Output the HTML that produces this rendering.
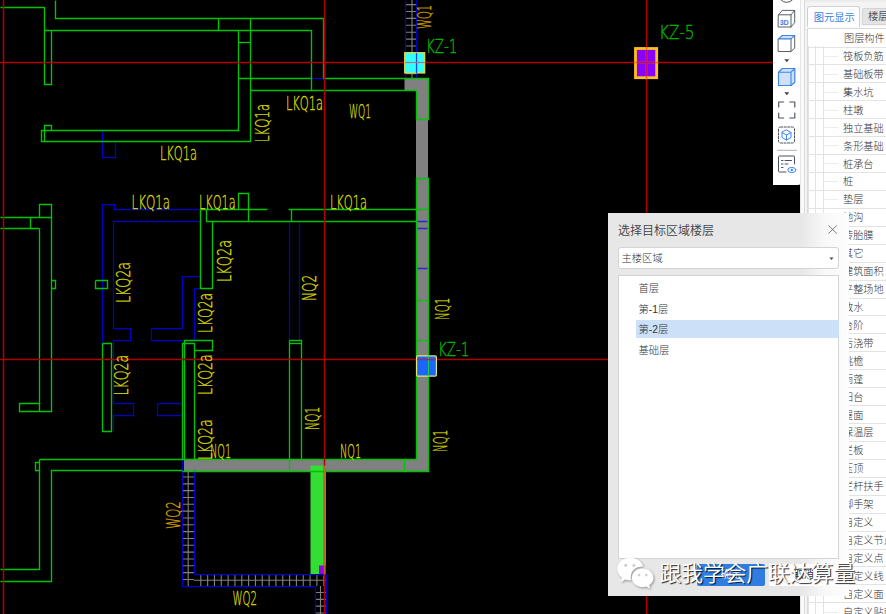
<!DOCTYPE html>
<html lang="zh-CN"><head><meta charset="utf-8"><title>选择目标区域楼层</title>
<style>
html,body{margin:0;padding:0;background:#000;}
body{width:886px;height:614px;overflow:hidden;position:relative;font-family:"Liberation Sans","Noto Sans CJK SC",sans-serif;}
#cad{position:absolute;left:0;top:0;}
#tb{position:absolute;left:773px;top:0;width:27.5px;height:184.5px;background:#fff;border-radius:0 0 3px 0;}
#tb svg{position:absolute;left:0;top:0;}
#rp{position:absolute;left:800px;top:0;width:86px;height:614px;background:linear-gradient(90deg,#e6e6e6 0,#e6e6e6 1px,#fafafa 1px,#fafafa 4px,#dadada 4px,#dadada 5px,#f4f4f4 5px);overflow:hidden;}
#rp .in{position:absolute;left:1px;top:0;width:85px;height:614px;}
#rp .tb2{position:absolute;left:5px;top:26px;width:90px;height:3px;background:#fbfbfb;}
#rp .ts{position:absolute;left:4px;top:0;width:90px;height:2px;background:#ececec;}
#rp .list{position:absolute;left:6px;top:28px;width:90px;height:600px;background:#fff;border-left:1px solid #d9d9d9;border-top:1px solid #d9d9d9;}
#rp .vl{position:absolute;top:46px;width:1px;height:580px;background:#e3e3e3;}
#rp .tab{position:absolute;left:6px;top:6px;width:53px;height:20.5px;padding-left:1.5px;padding-top:0.6px;background:#fff;border:1px solid #d0d0d0;border-bottom:none;border-radius:3px 3px 0 0;box-sizing:border-box;color:#3a7fd8;font-size:10.3px;line-height:20px;text-align:center;}
#rp .tab2{position:absolute;left:61px;top:8.2px;width:40px;height:16.8px;background:#e4e4e4;border:1px solid #d4d4d4;border-radius:2px 2px 0 0;box-sizing:border-box;color:#555;font-size:10.3px;line-height:16.5px;padding-left:5px;white-space:nowrap;}
.row{position:absolute;left:6px;width:90px;height:17.93px;border-bottom:1px solid #e3e3e3;box-sizing:border-box;font-size:10.2px;color:#333;white-space:nowrap;}
.row span{position:absolute;left:36px;top:0.4px;font-weight:300;line-height:18.93px;}
.row i{position:absolute;left:17px;top:8.2px;width:14px;height:1px;background:#ededed;}
#dlg{position:absolute;left:608px;top:213px;width:240.5px;height:383px;background:linear-gradient(90deg,#e7e7e7 0,#e7e7e7 193px,#efefef 204px,#f8f8f8 216px,#fdfdfd 240px);}
#dlg .ttl{font-weight:350;position:absolute;left:10px;top:8.7px;font-size:12px;color:#444;line-height:18px;white-space:nowrap;}
#dlg .sel{position:absolute;left:10px;top:34px;width:221px;height:22px;font-weight:300;background:#fff;border:1px solid #d4d4d4;border-radius:3px;box-sizing:border-box;font-size:10.3px;color:#333;line-height:21.5px;padding-left:2.5px;}
#dlg .lb{position:absolute;left:10px;top:62px;width:221px;height:283.5px;background:#fff;border:1px solid #d4d4d4;box-sizing:border-box;}
#dlg .it{font-weight:300;position:absolute;left:16.5px;width:202.5px;height:18px;font-size:10.3px;color:#333;line-height:18px;padding-left:3px;box-sizing:border-box;white-space:nowrap;}
#dlg .ok{position:absolute;left:89px;top:350.5px;width:68px;height:22px;background:#2f7de1;border-radius:2px;color:#fff;font-size:10.3px;line-height:22px;text-align:center;}
#dlg .cc{position:absolute;left:161px;top:350.5px;width:69.5px;height:22px;background:#fdfdfd;border-radius:2px;color:#333;font-size:10.3px;line-height:22px;text-align:center;}
#wm{position:absolute;left:659.5px;top:559.1px;font-size:21.8px;font-weight:350;letter-spacing:-0.08px;line-height:30px;color:#fff;white-space:nowrap;font-family:"Liberation Sans","Noto Sans CJK SC",sans-serif;text-shadow:1.2px 1.2px 0.8px rgba(0,0,0,.8);}
</style></head><body>
<svg id="cad" width="886" height="614" viewBox="0 0 886 614">
<path d="M404.5 78 H428 V471 H184 V459 H416 V90.5 H404.5 Z" fill="#808080"/>
<rect x="310.5" y="465.5" width="15.5" height="109" fill="#33dd33"/>
<rect x="319" y="565.5" width="7" height="9" fill="#9a00e6"/>
<path d="M412 0 V78 M405 4.60 H416.5 M405 11.50 H416.5 M405 18.40 H416.5 M405 25.30 H416.5 M405 32.20 H416.5 M405 39.10 H416.5 M405 46.00 H416.5 M405 52.90 H416.5 M405 59.80 H416.5 M405 66.70 H416.5 M405 73.60 H416.5 M188.2 471 V586 M182.5 477.00 H194 M182.5 483.83 H194 M182.5 490.66 H194 M182.5 497.49 H194 M182.5 504.32 H194 M182.5 511.15 H194 M182.5 517.98 H194 M182.5 524.81 H194 M182.5 531.64 H194 M182.5 538.47 H194 M182.5 545.30 H194 M182.5 552.13 H194 M182.5 558.96 H194 M182.5 565.79 H194 M182.5 572.62 H194 M182.5 579.45 H194 M194 580.2 H326 M200.80 574.5 V586 M207.63 574.5 V586 M214.46 574.5 V586 M221.29 574.5 V586 M228.12 574.5 V586 M234.95 574.5 V586 M241.78 574.5 V586 M248.61 574.5 V586 M255.44 574.5 V586 M262.27 574.5 V586 M269.10 574.5 V586 M275.93 574.5 V586 M282.76 574.5 V586 M289.59 574.5 V586 M296.42 574.5 V586 M303.25 574.5 V586 M310.08 574.5 V586 M316.91 574.5 V586 M323.74 574.5 V586 M320.5 586 V614 M315 592.50 H326 M315 599.33 H326 M315 606.16 H326 M315 612.99 H326" stroke="#ffffff" stroke-opacity="0.5" stroke-width="1.1" fill="none"/>
<path d="M102.5 130.5 L102.5 157.5 L115.5 157.5 L115.5 141.5" stroke="#0000c8" stroke-width="1.25" fill="none"/>
<path d="M102.5 343.5 L102.5 204.5 L114.5 204.5 L114.5 209.5 L200.5 209.5" stroke="#0000c8" stroke-width="1.25" fill="none"/>
<path d="M200.5 221.5 L113.5 221.5 L113.5 328.5 L130.5 328.5 L130.5 340.5 L113.5 340.5 L113.5 403.5 L133.5 403.5 L133.5 415.5 L113.5 415.5 L113.5 431.5" stroke="#0000c8" stroke-width="1.25" fill="none"/>
<path d="M200.5 276.5 L182.5 276.5 L182.5 328.5 L151.5 328.5 L151.5 340.5 L194.5 340.5 L194.5 288.5 L200.5 288.5" stroke="#0000c8" stroke-width="1.25" fill="none"/>
<path d="M182.5 403.5 L157.5 403.5 L157.5 415.5 L182.5 415.5" stroke="#0000c8" stroke-width="1.25" fill="none"/>
<path d="M289.5 221.5 L289.5 340.5" stroke="#0000c8" stroke-width="1.25" fill="none"/>
<path d="M299.5 221.5 L299.5 340.5" stroke="#0000c8" stroke-width="1.25" fill="none"/>
<path d="M311.5 78.5 L323.5 78.5" stroke="#0000c8" stroke-width="1.25" fill="none"/>
<path d="M405.5 0.5 L405.5 78.5" stroke="#0000c8" stroke-width="1.25" fill="none"/>
<path d="M416.5 0.5 L416.5 78.5" stroke="#0000c8" stroke-width="1.25" fill="none"/>
<path d="M182.5 459.5 L182.5 586.5 L315.5 586.5 L315.5 614.5" stroke="#0000c8" stroke-width="1.25" fill="none"/>
<path d="M194.5 470.5 L194.5 574.5 L326.5 574.5 L326.5 614.5" stroke="#0000c8" stroke-width="1.25" fill="none"/>
<path d="M417.5 221.5 L427.5 221.5" stroke="#2a2ad0" stroke-width="1.6" fill="none"/>
<path d="M417.5 228.5 L427.5 228.5" stroke="#2a2ad0" stroke-width="1.6" fill="none"/>
<path d="M417.5 268.5 L427.5 268.5" stroke="#2a2ad0" stroke-width="1.6" fill="none"/>
<path d="M0.5 7.5 L44.5 7.5 L44.5 84.5 L51.5 84.5 L51.5 30.5" stroke="#00c400" stroke-width="1.35" fill="none"/>
<path d="M55.5 0.5 L55.5 18.5 L323.5 18.5 L323.5 78.5" stroke="#00c400" stroke-width="1.35" fill="none"/>
<path d="M44.5 30.5 L311.5 30.5 L311.5 90.5" stroke="#00c400" stroke-width="1.35" fill="none"/>
<path d="M218.5 18.5 L218.5 30.5" stroke="#00c400" stroke-width="1.35" fill="none"/>
<path d="M238.5 30.5 L238.5 130.5 L41.5 130.5 L41.5 141.5 L250.5 141.5 L250.5 18.5" stroke="#00c400" stroke-width="1.35" fill="none"/>
<path d="M44.5 141.5 L44.5 125.5 L51.5 125.5 L51.5 130.5" stroke="#00c400" stroke-width="1.35" fill="none"/>
<path d="M238.5 42.5 L250.5 42.5" stroke="#00c400" stroke-width="1.35" fill="none"/>
<path d="M238.5 78.5 L311.5 78.5" stroke="#00c400" stroke-width="1.35" fill="none"/>
<path d="M323.5 78.5 L428.5 78.5 L428.5 119.5 L416.5 119.5 L416.5 90.5 L250.5 90.5" stroke="#00c400" stroke-width="1.35" fill="none"/>
<path d="M416.5 459.5 L416.5 178.5 L428.5 178.5 L428.5 471.5 L182.5 471.5" stroke="#00c400" stroke-width="1.35" fill="none"/>
<path d="M416.5 300.5 L428.5 300.5" stroke="#00c400" stroke-width="1.35" fill="none"/>
<path d="M416.5 340.5 L428.5 340.5" stroke="#00c400" stroke-width="1.35" fill="none"/>
<path d="M39.5 459.5 L416.5 459.5" stroke="#00c400" stroke-width="1.35" fill="none"/>
<path d="M404.5 459.5 L404.5 471.5" stroke="#00c400" stroke-width="1.35" fill="none"/>
<path d="M289.5 340.5 L289.5 471.5" stroke="#00c400" stroke-width="1.35" fill="none"/>
<path d="M200.5 209.5 L267.5 209.5" stroke="#00c400" stroke-width="1.35" fill="none"/>
<path d="M288.5 209.5 L428.5 209.5" stroke="#00c400" stroke-width="1.35" fill="none"/>
<path d="M206.5 209.5 L206.5 221.5 L416.5 221.5" stroke="#00c400" stroke-width="1.35" fill="none"/>
<path d="M200.5 209.5 L200.5 288.5 L212.5 288.5 L212.5 221.5" stroke="#00c400" stroke-width="1.35" fill="none"/>
<path d="M238.5 209.5 L238.5 193.5 L248.5 193.5 L248.5 221.5" stroke="#00c400" stroke-width="1.35" fill="none"/>
<path d="M291.5 209.5 L291.5 221.5" stroke="#00c400" stroke-width="1.35" fill="none"/>
<path d="M0.5 217.5 L51.5 217.5" stroke="#00c400" stroke-width="1.35" fill="none"/>
<path d="M39.5 403.5 L19.5 403.5 L19.5 411.5 L51.5 411.5 L51.5 204.5 L39.5 204.5 L39.5 217.5" stroke="#00c400" stroke-width="1.35" fill="none"/>
<path d="M39.5 228.5 L39.5 411.5" stroke="#00c400" stroke-width="1.35" fill="none"/>
<path d="M0.5 228.5 L39.5 228.5" stroke="#00c400" stroke-width="1.35" fill="none"/>
<path d="M30.5 217.5 L30.5 228.5" stroke="#00c400" stroke-width="1.35" fill="none"/>
<path d="M51.5 280.5 L55.5 280.5 L55.5 288.5 L51.5 288.5" stroke="#00c400" stroke-width="1.35" fill="none"/>
<path d="M95.5 280.5 L107.5 280.5 L107.5 288.5 L95.5 288.5 L95.5 280.5" stroke="#00c400" stroke-width="1.35" fill="none"/>
<path d="M102.5 343.5 L111.5 343.5 L111.5 431.5 L102.5 431.5 L102.5 343.5" stroke="#00c400" stroke-width="1.35" fill="none"/>
<path d="M184.5 459.5 L184.5 340.5 L212.5 340.5 L212.5 350.5 L194.5 350.5" stroke="#00c400" stroke-width="1.35" fill="none"/>
<path d="M182.5 459.5 L182.5 343.5 L194.5 343.5 L194.5 459.5" stroke="#00c400" stroke-width="1.35" fill="none"/>
<path d="M289.5 340.5 L301.5 340.5 L301.5 459.5" stroke="#00c400" stroke-width="1.35" fill="none"/>
<path d="M289.5 343.5 L301.5 343.5" stroke="#00c400" stroke-width="1.35" fill="none"/>
<path d="M0.5 569.5 L39.5 569.5 L39.5 459.5" stroke="#00c400" stroke-width="1.35" fill="none"/>
<path d="M0.5 581.5 L51.5 581.5 L51.5 470.5 L182.5 470.5" stroke="#00c400" stroke-width="1.35" fill="none"/>
<path d="M39.5 462.5 L35.5 462.5 L35.5 470.5 L39.5 470.5" stroke="#00c400" stroke-width="1.35" fill="none"/>
<path d="M3.5 0 V614" stroke="#b00000" stroke-width="1.5"/>
<path d="M324.5 0 V614" stroke="#b00000" stroke-width="1.5"/>
<path d="M646.5 0 V614" stroke="#b00000" stroke-width="1.5"/>
<path d="M0 62.5 H886" stroke="#b00000" stroke-width="1.5"/>
<path d="M0 359.5 H886" stroke="#b00000" stroke-width="1.5"/>
<path d="M324.5 465.5 V574.5" stroke="#b86a20" stroke-width="1.5"/>
<rect x="404.7" y="52.7" width="20" height="20.3" fill="#33ffff" stroke="#e0e040" stroke-width="1.2"/>
<path d="M416.5 53 V73 M405 62.5 H424.5" stroke="#1040ff" stroke-width="1.2" fill="none"/>
<path d="M405 62.5 H424.5" stroke="#c07070" stroke-width="1.2" fill="none"/>
<rect x="635.5" y="48.5" width="21.2" height="29.2" fill="#8a00ff" stroke="#ffc01e" stroke-width="2.8"/>
<path d="M646.5 47 V79.2 M634 62.5 H658.2" stroke="#e07a20" stroke-width="1.5"/>
<path d="M646.5 50 V76.3 M637 62.5 H655.3" stroke="#c01060" stroke-width="1.5"/>
<rect x="416.6" y="355.9" width="19.8" height="20.2" rx="1.2" fill="#1a66ff" stroke="#e6e668" stroke-width="1.2"/>
<path d="M428.5 355.5 V376.5" stroke="#22c848" stroke-width="1"/>
<path d="M417.2 359.5 H435.8" stroke="#8a3070" stroke-width="1.5"/>
<g font-family="'DejaVu Sans', 'Liberation Sans', sans-serif" font-weight="200" font-size="19.6" stroke-width="0.4"><text x="286.00" y="110.00" textLength="37.12" lengthAdjust="spacingAndGlyphs" fill="#d6d600" stroke="#d6d600">LKQ1a</text>
<text x="349.00" y="118.00" textLength="22.00" lengthAdjust="spacingAndGlyphs" fill="#d6d600" stroke="#d6d600">WQ1</text>
<text x="160.00" y="160.00" textLength="37.12" lengthAdjust="spacingAndGlyphs" fill="#d6d600" stroke="#d6d600">LKQ1a</text>
<text x="131.50" y="209.00" textLength="38.66" lengthAdjust="spacingAndGlyphs" fill="#d6d600" stroke="#d6d600">LKQ1a</text>
<text x="199.00" y="208.50" textLength="36.61" lengthAdjust="spacingAndGlyphs" fill="#d6d600" stroke="#d6d600">LKQ1a</text>
<text x="330.00" y="208.50" textLength="37.09" lengthAdjust="spacingAndGlyphs" fill="#d6d600" stroke="#d6d600">LKQ1a</text>
<text x="210.00" y="458.00" textLength="21.05" lengthAdjust="spacingAndGlyphs" fill="#d6d600" stroke="#d6d600">NQ1</text>
<text x="340.00" y="458.00" textLength="21.05" lengthAdjust="spacingAndGlyphs" fill="#d6d600" stroke="#d6d600">NQ1</text>
<text x="232.50" y="605.00" textLength="24.52" lengthAdjust="spacingAndGlyphs" fill="#d6d600" stroke="#d6d600">WQ2</text>
<text transform="translate(268.50 142.00) rotate(-90)" textLength="38.12" lengthAdjust="spacingAndGlyphs" fill="#d6d600" stroke="#d6d600">LKQ1a</text>
<text transform="translate(129.50 303.00) rotate(-90)" textLength="41.11" lengthAdjust="spacingAndGlyphs" fill="#d6d600" stroke="#d6d600">LKQ2a</text>
<text transform="translate(231.00 282.00) rotate(-90)" textLength="42.11" lengthAdjust="spacingAndGlyphs" fill="#d6d600" stroke="#d6d600">LKQ2a</text>
<text transform="translate(316.00 301.00) rotate(-90)" textLength="26.18" lengthAdjust="spacingAndGlyphs" fill="#d6d600" stroke="#d6d600">NQ2</text>
<text transform="translate(128.00 395.50) rotate(-90)" textLength="40.64" lengthAdjust="spacingAndGlyphs" fill="#d6d600" stroke="#d6d600">LKQ2a</text>
<text transform="translate(211.50 333.00) rotate(-90)" textLength="40.11" lengthAdjust="spacingAndGlyphs" fill="#d6d600" stroke="#d6d600">LKQ2a</text>
<text transform="translate(211.50 395.00) rotate(-90)" textLength="40.60" lengthAdjust="spacingAndGlyphs" fill="#d6d600" stroke="#d6d600">LKQ2a</text>
<text transform="translate(211.50 460.00) rotate(-90)" textLength="40.60" lengthAdjust="spacingAndGlyphs" fill="#d6d600" stroke="#d6d600">LKQ2a</text>
<text transform="translate(448.50 320.00) rotate(-90)" textLength="22.22" lengthAdjust="spacingAndGlyphs" fill="#d6d600" stroke="#d6d600">NQ1</text>
<text transform="translate(319.00 430.00) rotate(-90)" textLength="23.21" lengthAdjust="spacingAndGlyphs" fill="#d6d600" stroke="#d6d600">NQ1</text>
<text transform="translate(447.00 452.00) rotate(-90)" textLength="22.22" lengthAdjust="spacingAndGlyphs" fill="#d6d600" stroke="#d6d600">NQ1</text>
<text transform="translate(431.00 29.00) rotate(-90)" textLength="24.20" lengthAdjust="spacingAndGlyphs" fill="#d8a000" stroke="#d8a000">WQ1</text>
<text transform="translate(179.50 529.00) rotate(-90)" textLength="27.64" lengthAdjust="spacingAndGlyphs" fill="#d8a000" stroke="#d8a000">WQ2</text>
<text x="426.00" y="53.00" textLength="31.36" lengthAdjust="spacingAndGlyphs" fill="#00b400" stroke="#00b400">KZ-1</text>
<text x="659.00" y="39.30" textLength="35.31" lengthAdjust="spacingAndGlyphs" fill="#00b400" stroke="#00b400">KZ-5</text>
<text x="438.00" y="356.00" textLength="31.36" lengthAdjust="spacingAndGlyphs" fill="#00b400" stroke="#00b400">KZ-1</text></g>
</svg>
<div id="tb">
<svg width="28" height="185" viewBox="0 0 28 185" fill="none" stroke-linejoin="round" stroke-linecap="round">
<circle cx="13.8" cy="-5.8" r="8.1" stroke="#555" stroke-width="1"/>
<g stroke="#5a5f6a" stroke-width="1">
<path d="M5.5 14.8 L9.3 10.4 H21.7 V22.6 L18 27 H5.5 Z M5.5 14.8 H18 V27 M18 14.8 L21.7 10.4"/>
<path d="M5.5 38.8 H18 V51.5 H5.5 Z M18 51.5 L21.7 48.2 V35.5"/>
</g>
<path d="M5.5 38.8 L9.3 35.5 H21.7 L18 38.8 Z" fill="#cfe2fb" stroke="#3b86f0" stroke-width="1.1"/>
<path d="M5.5 72.2 L9.3 68.5 H21.8 V82.3 L18 85.5 H5.5 Z" fill="#cfe0f8" stroke="#3b86f0" stroke-width="1.2"/>
<path d="M5.5 72.2 H18 V85.5 M18 72.2 L21.8 68.5" stroke="#3b86f0" stroke-width="1.1"/>
<path d="M11.3 59.3 H16.3 L13.8 62.3 Z M11.3 92.3 H16.3 L13.8 95.3 Z" fill="#444" stroke="none"/>
<path d="M5.7 107 V102 H10.7 M16.8 102 H21.8 V107 M21.8 113 V118 H16.8 M10.7 118 H5.7 V113" stroke="#4a5060" stroke-width="1.15"/>
<rect x="5.5" y="127" width="16" height="16" rx="2" stroke="#4a5060" stroke-width="1" stroke-dasharray="2.2 1.4"/>
<path d="M13.5 130 L18 132.5 V137.5 L13.5 140 L9 137.5 V132.5 Z M9 132.5 L13.5 135 L18 132.5 M13.5 135 V140" stroke="#3b86f0" stroke-width="1"/>
<path d="M4.5 150.3 H23.5" stroke="#b0b0b0" stroke-width="1"/>
<path d="M21.5 164 V157 Q21.5 156 20.5 156 H6.5 Q5.5 156 5.5 157 V171 Q5.5 172 6.5 172 H13" stroke="#4a5060" stroke-width="1"/>
<path d="M8.5 160.5 H10 M12 160.5 H18.5 M8.5 164 H10 M12 164 H15 M8.5 167.5 H10" stroke="#4a5060" stroke-width="1"/>
<ellipse cx="18.8" cy="170" rx="4" ry="2.6" stroke="#3b86f0" stroke-width="1" fill="#fff"/>
<circle cx="18.8" cy="170" r="1.2" fill="#3b86f0" stroke="none"/>
</svg>
<div style="position:absolute;left:6.7px;top:18.8px;font-size:7.2px;font-weight:bold;color:#3b7fe8;line-height:8px;letter-spacing:-0.1px;">3D</div>
</div>
<div id="rp"><div class="in">
<div class="ts"></div><div class="tb2"></div><div class="list"></div>
<div class="vl" style="left:7px"></div><div class="vl" style="left:13.5px"></div><div class="vl" style="left:22px"></div>
<div class="tab">图元显示</div><div class="tab2">楼层显示</div>
<div class="row hd" style="top:29.60px"><span style="left:37px">图层构件</span></div><div class="row" style="top:47.53px"><i></i><span>筏板负筋</span></div><div class="row" style="top:65.46px"><i></i><span>基础板带</span></div><div class="row" style="top:83.39px"><i></i><span>集水坑</span></div><div class="row" style="top:101.32px"><i></i><span>柱墩</span></div><div class="row" style="top:119.25px"><i></i><span>独立基础</span></div><div class="row" style="top:137.18px"><i></i><span>条形基础</span></div><div class="row" style="top:155.11px"><i></i><span>桩承台</span></div><div class="row" style="top:173.04px"><i></i><span>桩</span></div><div class="row" style="top:190.97px"><i></i><span>垫层</span></div><div class="row" style="top:208.90px"><i></i><span>地沟</span></div><div class="row" style="top:226.83px"><i></i><span>砖胎膜</span></div><div class="row" style="top:244.76px"><i></i><span>其它</span></div><div class="row" style="top:262.69px"><i></i><span>建筑面积</span></div><div class="row" style="top:280.62px"><i></i><span>平整场地</span></div><div class="row" style="top:298.55px"><i></i><span>散水</span></div><div class="row" style="top:316.48px"><i></i><span>台阶</span></div><div class="row" style="top:334.41px"><i></i><span>后浇带</span></div><div class="row" style="top:352.34px"><i></i><span>挑檐</span></div><div class="row" style="top:370.27px"><i></i><span>雨蓬</span></div><div class="row" style="top:388.20px"><i></i><span>阳台</span></div><div class="row" style="top:406.13px"><i></i><span>屋面</span></div><div class="row" style="top:424.06px"><i></i><span>保温层</span></div><div class="row" style="top:441.99px"><i></i><span>栏板</span></div><div class="row" style="top:459.92px"><i></i><span>压顶</span></div><div class="row" style="top:477.85px"><i></i><span>栏杆扶手</span></div><div class="row" style="top:495.78px"><i></i><span>脚手架</span></div><div class="row" style="top:513.71px"><i></i><span>自定义</span></div><div class="row" style="top:531.64px"><i></i><span>自定义节点</span></div><div class="row" style="top:549.57px"><i></i><span>自定义点</span></div><div class="row" style="top:567.50px"><i></i><span>自定义线</span></div><div class="row" style="top:585.43px"><i></i><span>自定义面</span></div><div class="row" style="top:603.36px"><i></i><span>自定义贴面</span></div>
</div></div>
<div id="dlg">
<div class="ttl">选择目标区域楼层</div>
<svg style="position:absolute;left:220px;top:12.2px" width="9.3" height="9" viewBox="0 0 10 10" preserveAspectRatio="none"><path d="M0.5 0.5 L9.5 9.5 M9.5 0.5 L0.5 9.5" stroke="#6e6e6e" stroke-width="1" fill="none"/></svg>
<div class="sel">主楼区域<svg style="position:absolute;right:4px;top:8.5px" width="5" height="4" viewBox="0 0 5 4"><path d="M0.5 0.5 H4.5 L2.5 3 Z" fill="#3a4560"/></svg></div>
<div class="lb"></div>
<div class="it" style="top:67px;left:27.5px;background:none">首层</div>
<div class="it" style="top:87.7px;left:27.5px;background:none">第-1层</div>
<div class="it" style="top:107px;left:27.5px;width:203px;background:#cce0f8;line-height:20.4px">第-2层</div>
<div class="it" style="top:128.7px;left:27.5px;background:none">基础层</div>
<div class="ok">确定</div><div class="cc">取消</div>
</div>
<svg style="position:absolute;left:616px;top:554.5px" width="41" height="39" preserveAspectRatio="none" viewBox="0 0 40 36">
<g fill="#fff" style="filter:drop-shadow(1px 1px 1px rgba(0,0,0,.35))">
<path d="M13.7 2.5 C6.5 2.5 1.3 7.3 1.3 13 C1.3 16.3 3 19 5.8 21 L4.6 25 L9.2 22.6 C10.6 23 12 23.3 13.7 23.3 C14.2 23.3 14.6 23.3 15 23.2 C14.6 22.2 14.4 21.2 14.4 20.2 C14.4 14.8 19.4 10.6 25.6 10.6 C25.9 10.6 26.2 10.6 26.5 10.7 C25.4 5.9 20 2.5 13.7 2.5 Z"/>
<path d="M36.5 21 C36.5 16.3 31.9 12.4 26 12.4 C20.1 12.4 15.6 16.3 15.6 21 C15.6 25.8 20.1 29.6 26 29.6 C27.3 29.6 28.5 29.4 29.6 29.1 L33.4 31.2 L32.4 27.8 C34.9 26.2 36.5 23.8 36.5 21 Z"/>
</g>
<g fill="#cfcfcf"><circle cx="9.5" cy="9.5" r="1.5"/><circle cx="17.5" cy="9.5" r="1.5"/><circle cx="22.5" cy="18.5" r="1.3"/><circle cx="29.5" cy="18.5" r="1.3"/></g>
</svg>
<div id="wm">跟我学会广联达算量</div>
</body></html>
